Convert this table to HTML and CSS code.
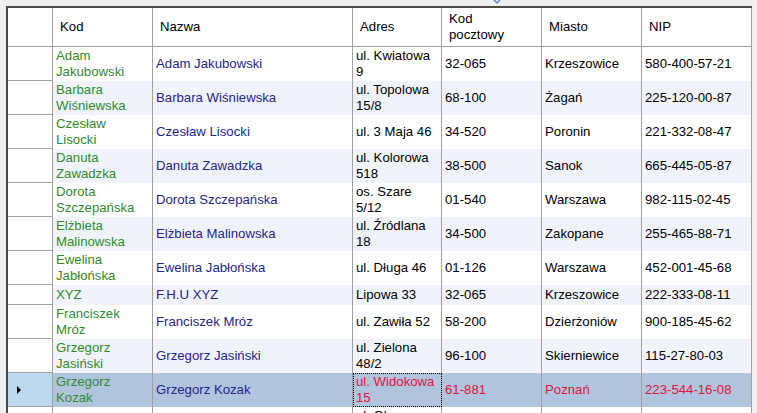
FILE: index.html
```html
<!DOCTYPE html>
<html lang="pl">
<head>
<meta charset="utf-8">
<title>Klienci</title>
<link rel="stylesheet" href="styles.css">
</head>
<body>
<div class="top-mark"><svg width="8" height="4" viewBox="0 0 8 4"><path d="M1 0 L4 3 L7 0" fill="none" stroke="#3a6fd8" stroke-width="1.2"/></svg></div>
<div class="grid">
  <div class="hdr">
    <div class="cell rh"></div>
    <div class="cell h kod">Kod</div>
    <div class="cell h nazwa">Nazwa</div>
    <div class="cell h adres">Adres</div>
    <div class="cell h kodp">Kod pocztowy</div>
    <div class="cell h miasto">Miasto</div>
    <div class="cell h nip">NIP</div>
  </div>

  <div class="row">
    <div class="cell rh"></div>
    <div class="cell kod g">Adam Jakubowski</div>
    <div class="cell nazwa b">Adam Jakubowski</div>
    <div class="cell adres">ul. Kwiatowa 9</div>
    <div class="cell kodp">32-065</div>
    <div class="cell miasto">Krzeszowice</div>
    <div class="cell nip">580-400-57-21</div>
  </div>
  <div class="row alt">
    <div class="cell rh"></div>
    <div class="cell kod g">Barbara Wiśniewska</div>
    <div class="cell nazwa b">Barbara Wiśniewska</div>
    <div class="cell adres">ul. Topolowa 15/8</div>
    <div class="cell kodp">68-100</div>
    <div class="cell miasto">Żagań</div>
    <div class="cell nip">225-120-00-87</div>
  </div>
  <div class="row">
    <div class="cell rh"></div>
    <div class="cell kod g">Czesław Lisocki</div>
    <div class="cell nazwa b">Czesław Lisocki</div>
    <div class="cell adres">ul. 3 Maja 46</div>
    <div class="cell kodp">34-520</div>
    <div class="cell miasto">Poronin</div>
    <div class="cell nip">221-332-08-47</div>
  </div>
  <div class="row alt">
    <div class="cell rh"></div>
    <div class="cell kod g">Danuta Zawadzka</div>
    <div class="cell nazwa b">Danuta Zawadzka</div>
    <div class="cell adres">ul. Kolorowa 518</div>
    <div class="cell kodp">38-500</div>
    <div class="cell miasto">Sanok</div>
    <div class="cell nip">665-445-05-87</div>
  </div>
  <div class="row">
    <div class="cell rh"></div>
    <div class="cell kod g">Dorota Szczepańska</div>
    <div class="cell nazwa b">Dorota Szczepańska</div>
    <div class="cell adres">os. Szare 5/12</div>
    <div class="cell kodp">01-540</div>
    <div class="cell miasto">Warszawa</div>
    <div class="cell nip">982-115-02-45</div>
  </div>
  <div class="row alt">
    <div class="cell rh"></div>
    <div class="cell kod g">Elżbieta Malinowska</div>
    <div class="cell nazwa b">Elżbieta Malinowska</div>
    <div class="cell adres">ul. Źródlana 18</div>
    <div class="cell kodp">34-500</div>
    <div class="cell miasto">Zakopane</div>
    <div class="cell nip">255-465-88-71</div>
  </div>
  <div class="row">
    <div class="cell rh"></div>
    <div class="cell kod g">Ewelina Jabłońska</div>
    <div class="cell nazwa b">Ewelina Jabłońska</div>
    <div class="cell adres">ul. Długa 46</div>
    <div class="cell kodp">01-126</div>
    <div class="cell miasto">Warszawa</div>
    <div class="cell nip">452-001-45-68</div>
  </div>
  <div class="row alt short">
    <div class="cell rh"></div>
    <div class="cell kod g">XYZ</div>
    <div class="cell nazwa b">F.H.U XYZ</div>
    <div class="cell adres">Lipowa 33</div>
    <div class="cell kodp">32-065</div>
    <div class="cell miasto">Krzeszowice</div>
    <div class="cell nip">222-333-08-11</div>
  </div>
  <div class="row">
    <div class="cell rh"></div>
    <div class="cell kod g">Franciszek Mróz</div>
    <div class="cell nazwa b">Franciszek Mróz</div>
    <div class="cell adres">ul. Zawiła 52</div>
    <div class="cell kodp">58-200</div>
    <div class="cell miasto">Dzierżoniów</div>
    <div class="cell nip">900-185-45-62</div>
  </div>
  <div class="row alt">
    <div class="cell rh"></div>
    <div class="cell kod g">Grzegorz Jasiński</div>
    <div class="cell nazwa b">Grzegorz Jasiński</div>
    <div class="cell adres">ul. Zielona 48/2</div>
    <div class="cell kodp">96-100</div>
    <div class="cell miasto">Skierniewice</div>
    <div class="cell nip">115-27-80-03</div>
  </div>
  <div class="row sel">
    <div class="cell rh"><span class="arrow"></span></div>
    <div class="cell kod g">Grzegorz Kozak</div>
    <div class="cell nazwa b">Grzegorz Kozak</div>
    <div class="cell adres r focus">ul. Widokowa 15</div>
    <div class="cell kodp r">61-881</div>
    <div class="cell miasto r">Poznań</div>
    <div class="cell nip r">223-544-16-08</div>
  </div>
  <div class="row">
    <div class="cell rh"></div>
    <div class="cell kod g"></div>
    <div class="cell nazwa b"></div>
    <div class="cell adres">ul. Olszowa 12</div>
    <div class="cell kodp"></div>
    <div class="cell miasto"></div>
    <div class="cell nip"></div>
  </div>
</div>
</body>
</html>
```

FILE: styles.css
```css
* { box-sizing: border-box; }
html, body {
  margin: 0;
  padding: 0;
  background: #f0f0f0;
  height: 413px;
  overflow: hidden;
  font-family: "Liberation Sans", Arial, sans-serif;
  font-size: 13.2px;
  line-height: 16px;
  color: #000;
}
.top-mark {
  position: absolute;
  left: 493px;
  top: 0;
  line-height: 0;
}
.grid {
  margin: 6px 0 0 6px;
  width: 746px;
  border-top: 2px solid #4a4a4a;
  border-left: 2px solid #4a4a4a;
  background: #fff;
  display: flex;
  flex-direction: column;
}
.hdr, .row {
  display: flex;
  height: 34px;
  flex: none;
}
.hdr { height: 39px; }
.row.short { height: 20px; }
.cell {
  display: flex;
  align-items: center;
  border-right: 1px solid #a0a0a0;
  padding: 0 4px 0 3px;
  overflow: hidden;
  height: 100%;
}
.hdr .cell {
  border-bottom: 1px solid #a0a0a0;
  padding-left: 7px;
  background: #fff;
}
.rh { width: 45px; flex: none; border-bottom: 1px solid #a0a0a0; background: #fff; padding: 0; }
.kod { width: 100px; flex: none; padding-right: 8px; }
.nazwa { width: 200px; flex: none; }
.adres { width: 89px; flex: none; padding-right: 5px; }
.kodp { width: 100px; flex: none; }
.miasto { width: 100px; flex: none; }
.nip { width: 110px; flex: none; }
.hdr .kodp { padding-right: 30px; }

.row.alt { background: #f0f4fa; }
.g { color: #2e8b2e; }
.b { color: #25258a; }
.r { color: #e0143c; }
.row.sel { background: #b0c4de; }
.row.sel .rh { background: #bcd9f0; }
.focus { outline: 1px dotted #000; outline-offset: -1px; }
.arrow {
  margin-left: 9px;
  width: 0;
  height: 0;
  border-top: 4px solid transparent;
  border-bottom: 4px solid transparent;
  border-left: 4px solid #000;
}
```
